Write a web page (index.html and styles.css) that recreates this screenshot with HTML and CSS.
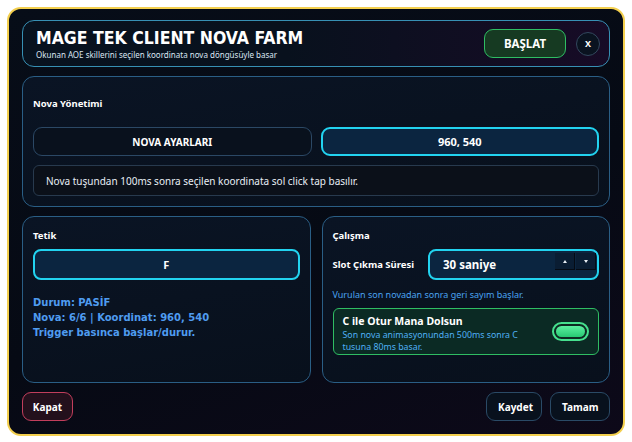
FILE: index.html
```html
<!DOCTYPE html>
<html lang="tr">
<head>
<meta charset="utf-8">
<link rel="stylesheet" href="styles.css">
</head>
<body>
<div class="window">
  <header class="header">
    <div class="titles">
      <h1 class="title">MAGE TEK CLIENT NOVA FARM</h1>
      <p class="subtitle">Okunan AOE skillerini seçilen koordinata nova döngüsüyle basar</p>
    </div>
    <div class="header-actions">
      <button class="btn-start">BAŞLAT</button>
      <button class="btn-close">X</button>
    </div>
  </header>

  <section class="card nova-card">
    <div class="card-label">Nova Yönetimi</div>
    <div class="nova-row">
      <button class="btn-plain">NOVA AYARLARI</button>
      <button class="btn-active">960, 540</button>
    </div>
    <div class="info-box">Nova tuşundan 100ms sonra seçilen koordinata sol click tap basılır.</div>
  </section>

  <div class="columns">
    <section class="card col-card">
      <div class="card-label">Tetik</div>
      <div class="key-input">F</div>
      <div class="status">
        <div>Durum: PASİF</div>
        <div>Nova: 6/6 | Koordinat: 960, 540</div>
        <div>Trigger basınca başlar/durur.</div>
      </div>
    </section>
    <section class="card col-card">
      <div class="card-label">Çalışma</div>
      <div class="slot-row">
        <span class="slot-label">Slot Çıkma Süresi</span>
        <div class="spinbox">
          <span class="spin-value">30 saniye</span>
          <span class="spin-btns">
            <span class="spin-btn"><span class="tri-up"></span></span>
            <span class="spin-btn"><span class="tri-down"></span></span>
          </span>
        </div>
      </div>
      <div class="hint">Vurulan son novadan sonra geri sayım başlar.</div>
      <div class="toggle-box">
        <div class="toggle-text">
          <div class="toggle-title">C ile Otur Mana Dolsun</div>
          <div class="toggle-desc">Son nova animasyonundan 500ms sonra C<br>tusuna 80ms basar.</div>
        </div>
        <span class="toggle"><span class="toggle-fill"></span></span>
      </div>
    </section>
  </div>

  <footer class="footer">
    <button class="btn-danger">Kapat</button>
    <div class="footer-right">
      <button class="btn-foot">Kaydet</button>
      <button class="btn-foot">Tamam</button>
    </div>
  </footer>
</div>
</body>
</html>
```

FILE: styles.css
```css
* { box-sizing: border-box; }
html, body { margin: 0; padding: 0; background: #ffffff; }
body {
  font-family: "Noto Sans", "DejaVu Sans", sans-serif;
  color: #ffffff;
}
button { font-family: inherit; cursor: pointer; }

.window {
  margin: 7px;
  height: 429px;
  border: 2px solid #f3cf4e;
  border-radius: 14px;
  background: linear-gradient(160deg, #070d18 0%, #060a14 55%, #0d0919 100%);
  padding: 11px 13px 13px 13px;
  display: flex;
  flex-direction: column;
  gap: 9px;
}

.header {
  height: 47px;
  border: 1px solid #3790b4;
  border-radius: 12px;
  background: linear-gradient(90deg, #08121f 0%, #08111d 45%, #170b26 100%);
  display: flex;
  align-items: center;
  justify-content: space-between;
  padding: 0 9px 0 13px;
}
.title {
  margin: 0;
  font-family: "DejaVu Sans Condensed", "DejaVu Sans", sans-serif;
  font-stretch: condensed;
  font-weight: bold;
  font-size: 17.5px;
  line-height: 19px;
  color: #ffffff;
}
.subtitle {
  margin: 2px 0 0 0;
  font-size: 8px;
  line-height: 9px;
  color: #dbe6f2;
}
.header-actions { display: flex; align-items: center; gap: 10px; }
.btn-start {
  width: 82px;
  height: 29px;
  border: 1px solid #2fbd63;
  border-radius: 9px;
  background: #163a22;
  color: #ffffff;
  font-weight: bold;
  font-size: 11.5px;
}
.btn-close {
  width: 24px;
  height: 24px;
  border-radius: 50%;
  border: 1px solid #33485e;
  background: #0a1320;
  color: #ffffff;
  font-weight: bold;
  font-size: 9px;
  padding: 0;
}

.card {
  border: 1px solid #2a5e85;
  border-radius: 12px;
  background: linear-gradient(170deg, #0a1424 0%, #08101c 100%);
}
.card-label {
  font-weight: bold;
  font-size: 9.5px;
  line-height: 14px;
  color: #ffffff;
}

.nova-card {
  height: 131px;
  padding: 20px 10px 10px 10px;
}
.nova-row {
  margin-top: 16px;
  display: grid;
  grid-template-columns: 1fr 1fr;
  gap: 9px;
}
.btn-plain {
  height: 29px;
  border: 1px solid #2b4865;
  border-radius: 9px;
  background: #09111d;
  color: #ffffff;
  font-weight: bold;
  font-size: 10px;
}
.btn-active {
  height: 29px;
  border: 2px solid #22d3f0;
  border-radius: 9px;
  background: #0b2540;
  color: #ffffff;
  font-weight: bold;
  font-size: 11px;
}
.info-box {
  margin-top: 9px;
  height: 31px;
  border: 1px solid #283a4e;
  border-radius: 6px;
  background: #0b1019;
  display: flex;
  align-items: center;
  padding-left: 12px;
  font-size: 10px;
  color: #e8eef5;
}

.columns {
  display: grid;
  grid-template-columns: 1fr 1fr;
  gap: 11px;
  height: 167px;
}
.col-card { padding: 12px 10px 10px 10px; }

.key-input {
  margin-top: 6px;
  height: 31px;
  border: 2px solid #22d3f0;
  border-radius: 8px;
  background: #0b2540;
  display: flex;
  align-items: center;
  justify-content: center;
  font-weight: bold;
  font-size: 11px;
}
.status {
  margin-top: 15px;
  font-family: "DejaVu Sans", sans-serif;
  font-weight: bold;
  font-size: 10px;
  line-height: 15px;
  color: #4f9cf0;
}

.slot-row {
  margin-top: 6px;
  display: flex;
  align-items: center;
  justify-content: space-between;
}
.slot-label { font-weight: bold; font-size: 9.5px; }
.spinbox {
  width: 171px;
  height: 31px;
  border: 2px solid #22d3f0;
  border-radius: 8px;
  background: #0b2540;
  display: flex;
  align-items: center;
  justify-content: space-between;
  padding: 0 1px 0 13px;
}
.spin-value { font-weight: bold; font-size: 11.5px; }
.spin-btns { display: flex; gap: 1px; align-self: flex-start; margin-top: 2px; }
.spin-btn {
  width: 20px;
  height: 17px;
  background: #0a1d33;
  border-right: 1px solid #050b14;
  border-bottom: 1px solid #050b14;
  display: flex;
  align-items: center;
  justify-content: center;
}
.tri-up {
  width: 0; height: 0;
  border-left: 2.5px solid transparent;
  border-right: 2.5px solid transparent;
  border-bottom: 3px solid #e8eef5;
}
.tri-down {
  width: 0; height: 0;
  border-left: 2.5px solid transparent;
  border-right: 2.5px solid transparent;
  border-top: 3px solid #e8eef5;
}
.hint {
  margin-top: 9px;
  font-size: 9px;
  line-height: 12px;
  color: #4aa3f0;
}
.toggle-box {
  margin-top: 7px;
  height: 47px;
  border: 1px solid #2fbd63;
  border-radius: 6px;
  background: #0b2a24;
  display: flex;
  align-items: flex-start;
  justify-content: space-between;
  padding: 5px 9px 0 9px;
}
.toggle-title { font-weight: bold; font-size: 10.5px; line-height: 15px; }
.toggle-desc { font-size: 8.8px; line-height: 12px; color: #4fb0f5; }
.toggle {
  align-self: center;
  margin-top: -5px;
  width: 37px;
  height: 19px;
  border: 2px solid #46e08e;
  border-radius: 10px;
  background: #0d2a22;
  padding: 2px;
  display: flex;
}
.toggle-fill {
  flex: 1;
  border-radius: 6px;
  background: linear-gradient(180deg, #5cf0a0 0%, #28c873 100%);
}

.footer {
  height: 29px;
  display: flex;
  justify-content: space-between;
}
.footer-right { display: flex; gap: 8px; }
.btn-danger {
  width: 51px;
  height: 29px;
  border: 1px solid #c23e5c;
  border-radius: 9px;
  background: #23101c;
  color: #ffffff;
  font-weight: bold;
  font-size: 10px;
}
.btn-foot {
  height: 29px;
  border: 1px solid #2a4a66;
  border-radius: 9px;
  background: #08111d;
  color: #ffffff;
  font-weight: bold;
  font-size: 10px;
  padding: 0 11px;
}
.btn-foot:first-child { width: 56px; }
.btn-foot:last-child { width: 60px; }
```
